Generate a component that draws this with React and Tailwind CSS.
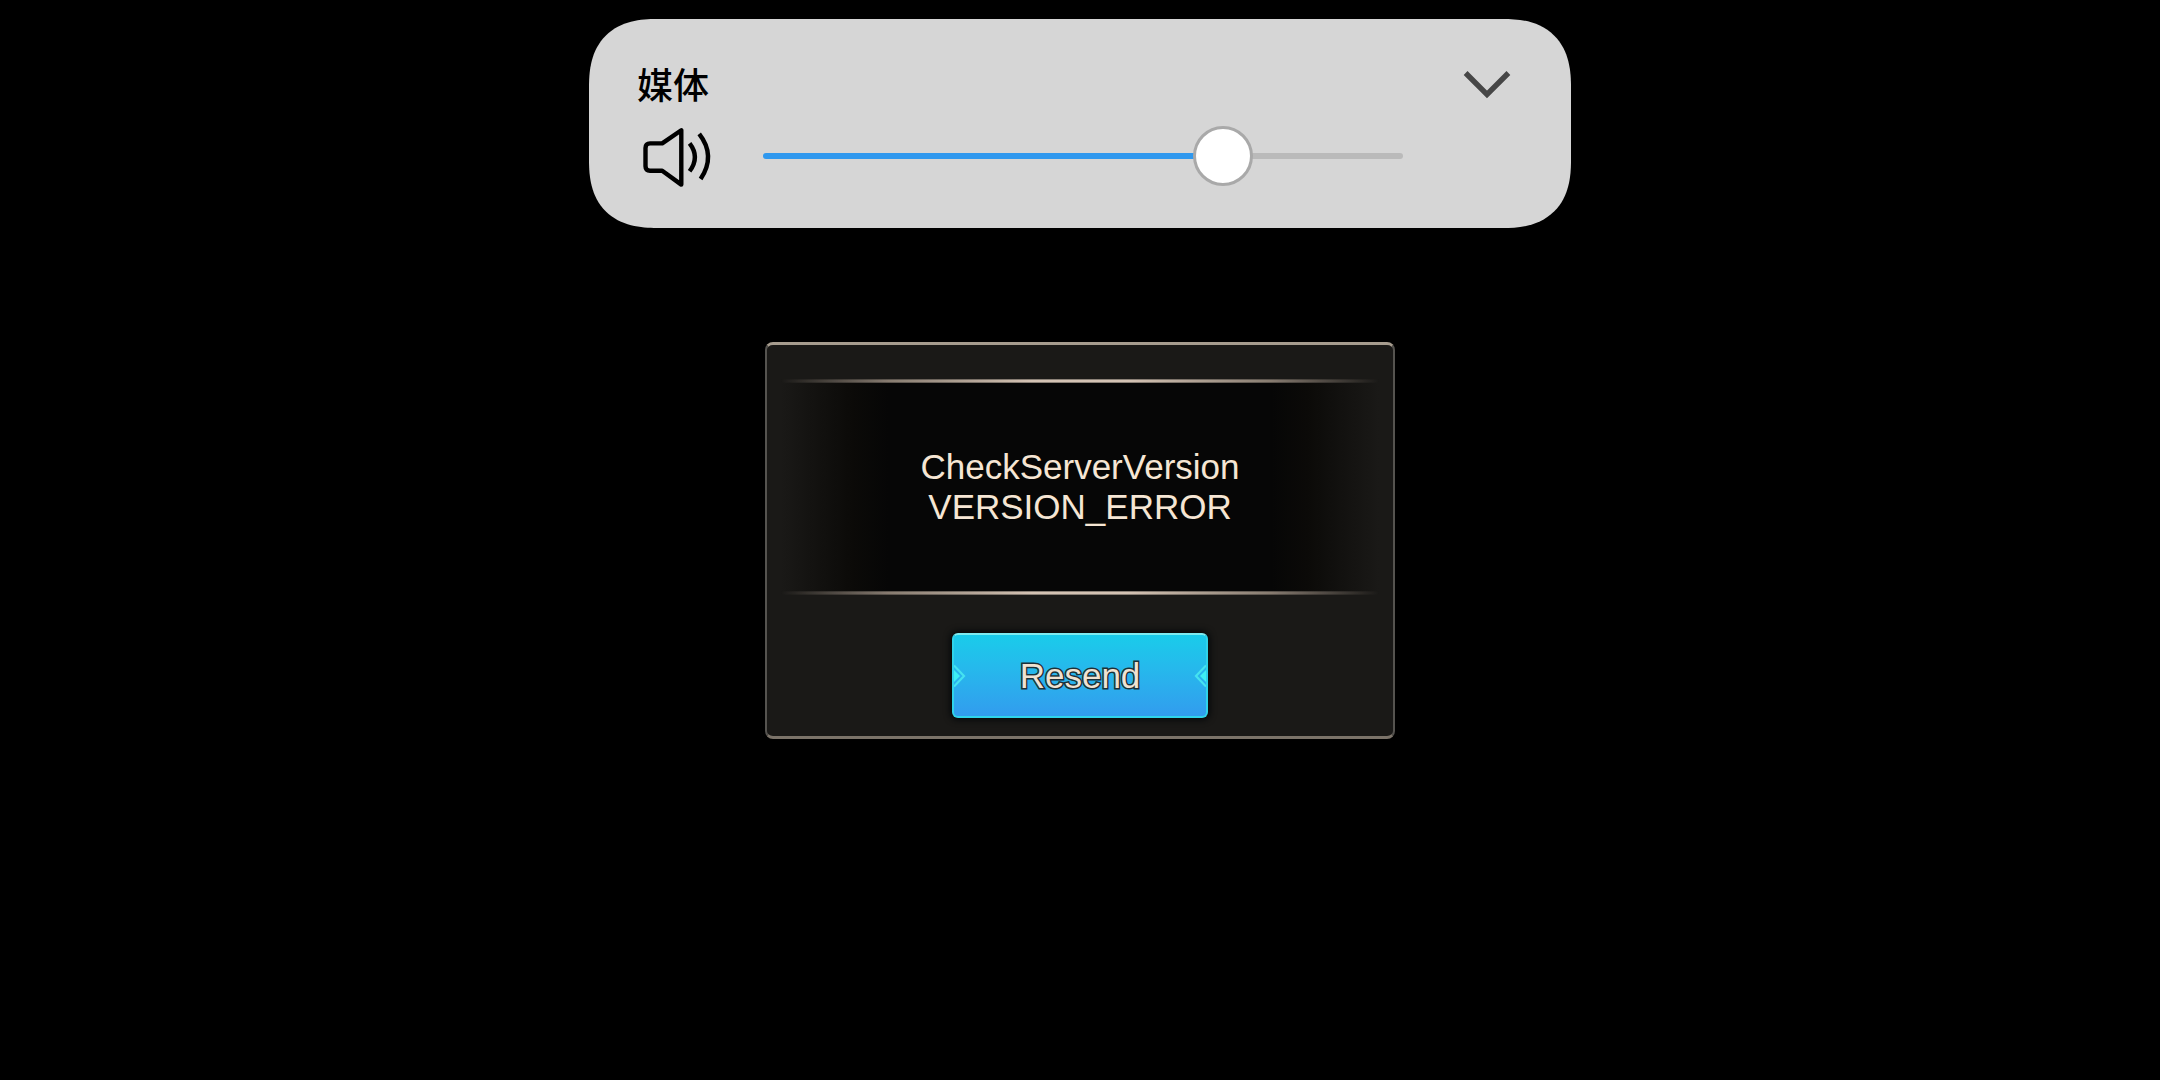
import { useState } from 'react';

const MAX_VOLUME = 31;

const SpeakerIcon = () => (
  <svg className="w-[68px] h-[60px] shrink-0 overflow-visible" viewBox="0 0 68 60" fill="none" stroke="#000" strokeWidth="4.4" strokeLinejoin="round" aria-hidden="true">
    <path d="M7 17.4H19.2L38.3 4.2V58.6L19.2 44.7H7Q2.5 44.7 2.5 40.2V22Q2.5 17.4 7 17.4Z" />
    <path d="M46.6 17.3Q57.2 31 46.6 45.2" />
    <path d="M56.2 7.8Q73.2 29.6 57.6 53" />
  </svg>
);

const ChevronIcon = () => (
  <svg className="w-12 h-7" viewBox="0 0 48 28" fill="none" stroke="#464646" strokeWidth="5.4" aria-hidden="true">
    <path d="M2.6 2L24 23.4L45.4 2" />
  </svg>
);

const ButtonNotch = ({ className }) => (
  <svg className={`absolute top-1/2 -translate-y-1/2 w-3 h-6 ${className}`} viewBox="0 0 12 24" fill="none" aria-hidden="true">
    <path d="M0 1.5L10 12L0 22.5" stroke="#45e2f0" strokeWidth="2.2" />
    <path d="M0 6L6 12L0 18Z" fill="#3df0f4" />
  </svg>
);

const VolumePanel = () => {
  const [volume, setVolume] = useState(23);
  const ratio = volume / MAX_VOLUME;

  return (
    <section className="w-[982px] max-w-full rounded-[68px] [corner-shape:superellipse(1.3)] bg-[#d6d6d6] pl-12 pr-[60px] pt-[45px] pb-[42px]">
      <div className="flex items-start justify-between">
        <label htmlFor="volume" className="text-[36px] leading-[38px] font-medium text-black font-['Noto_Sans_CJK_SC',sans-serif]">媒体</label>
        <button type="button" aria-label="Expand" className="cursor-pointer py-[7px]">
          <ChevronIcon />
        </button>
      </div>
      <div className="flex items-center pt-5 pl-[6px] pr-[108px]">
        <SpeakerIcon />
        <input
          id="volume"
          type="range"
          min="0"
          max={MAX_VOLUME}
          value={volume}
          onChange={(e) => setVolume(Number(e.target.value))}
          style={{ '--fill': `calc(30px + (100% - 60px) * ${ratio})` }}
          className="ml-[52px] h-[60px] min-w-0 flex-1 cursor-pointer appearance-none bg-transparent [&::-webkit-slider-runnable-track]:h-[6px] [&::-webkit-slider-runnable-track]:rounded-full [&::-webkit-slider-runnable-track]:bg-[linear-gradient(to_right,#2f98ee_var(--fill),#bababa_var(--fill))] [&::-webkit-slider-thumb]:appearance-none [&::-webkit-slider-thumb]:-mt-[27px] [&::-webkit-slider-thumb]:size-[60px] [&::-webkit-slider-thumb]:rounded-full [&::-webkit-slider-thumb]:border-[3px] [&::-webkit-slider-thumb]:border-[#a9a9a9] [&::-webkit-slider-thumb]:bg-white"
        />
      </div>
    </section>
  );
};

const GlowLine = () => (
  <div className="h-1 bg-[linear-gradient(to_right,transparent,#8c8075_18%,#dccabb_42%,#dccabb_58%,#8c8075_82%,transparent)] [mask-image:linear-gradient(to_bottom,#0006,#000_40%,#000_60%,#0006)]" />
);

const ErrorDialog = () => (
  <section role="alertdialog" aria-labelledby="message" className="mt-[114px] w-[630px] max-w-full rounded-lg border-x-2 border-y-[3px] border-x-[#55534f] border-t-[#a69c8e] border-b-[#7b7369] bg-[#1a1917] px-[14px] pt-[34px] pb-[18px]">
    <GlowLine />
    <div className="bg-[linear-gradient(to_right,#1a1917,#0b0a08_12%,#060606_18%,#060606_82%,#0b0a08_88%,#1a1917)] py-16">
      <p id="message" className="text-center text-[35px] leading-10 text-[#f6e6d4]">
        CheckServerVersion
        <br />
        VERSION_ERROR
      </p>
    </div>
    <GlowLine />
    <div className="flex justify-center pt-[38px]">
      <button type="button" className="relative w-[256px] h-[85px] cursor-pointer rounded-md border-2 border-[#2fd3ea] border-t-[#7debf0] bg-linear-to-b from-[#18cdea] to-[#329bee] bg-origin-border text-[35px] leading-10 text-[#f0e2d2] shadow-[0_0_6px_2px_#06090a]">
        <ButtonNotch className="left-0" />
        <span className="[-webkit-text-stroke:3px_#1d3038] [paint-order:stroke_fill]">Resend</span>
        <ButtonNotch className="right-0 -scale-x-100" />
      </button>
    </div>
  </section>
);

const App = () => {
  return (
    <main className="flex min-h-screen flex-col items-center bg-black pt-[19px] font-['Liberation_Sans',Arial,sans-serif]">
      <VolumePanel />
      <ErrorDialog />
    </main>
  );
};

export default App;
